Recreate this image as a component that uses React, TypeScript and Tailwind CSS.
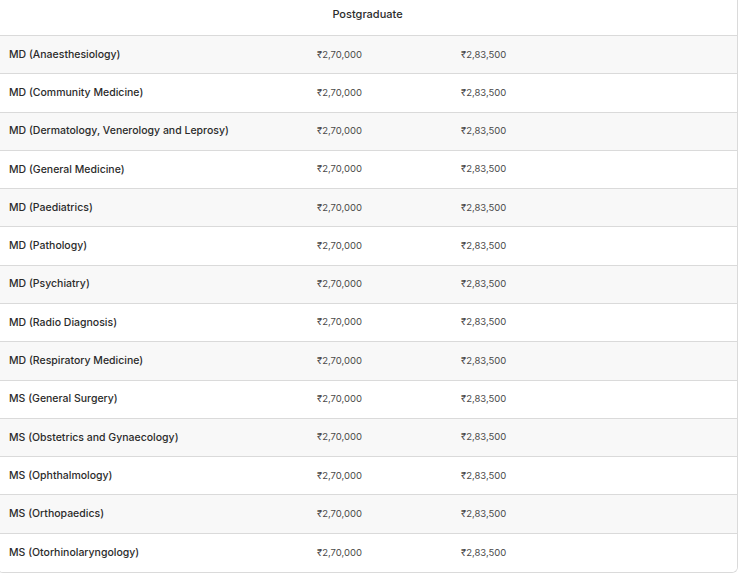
const rows = [
  'MD (Anaesthesiology)',
  'MD (Community Medicine)',
  'MD (Dermatology, Venerology and Leprosy)',
  'MD (General Medicine)',
  'MD (Paediatrics)',
  'MD (Pathology)',
  'MD (Psychiatry)',
  'MD (Radio Diagnosis)',
  'MD (Respiratory Medicine)',
  'MS (General Surgery)',
  'MS (Obstetrics and Gynaecology)',
  'MS (Ophthalmology)',
  'MS (Orthopaedics)',
  'MS (Otorhinolaryngology)',
];

export default function App() {
  return (
    <div className="w-[740px] h-[576px] bg-white overflow-hidden" style={{ fontFamily: 'Inter, "Noto Sans", sans-serif' }}>
      <div className="ml-[-3px] w-[741px] border-x border-b border-[#dadada] rounded-b-md overflow-hidden bg-white">
        <div className="h-[36px] pb-[6px] border-b border-[#dadada] flex items-center justify-center text-[11px] font-medium text-[#2b2b2b]">
          Postgraduate
        </div>
        {rows.map((name, i) => (
          <div
            key={name}
            className={`grid grid-cols-[319px_144px_1fr] items-center h-[38.29px] border-b border-[#dadada] last:border-b-0 ${i % 2 === 0 ? 'bg-[#f8f8f8]' : 'bg-white'}`}
          >
            <div className="pl-[11px] text-[10.5px] font-medium text-[#2b2b2b]">{name}</div>
            <div className="text-[9.5px] text-[#4a4a4a]">₹2,70,000</div>
            <div className="text-[9.5px] text-[#4a4a4a]">₹2,83,500</div>
          </div>
        ))}
      </div>
    </div>
  );
}
